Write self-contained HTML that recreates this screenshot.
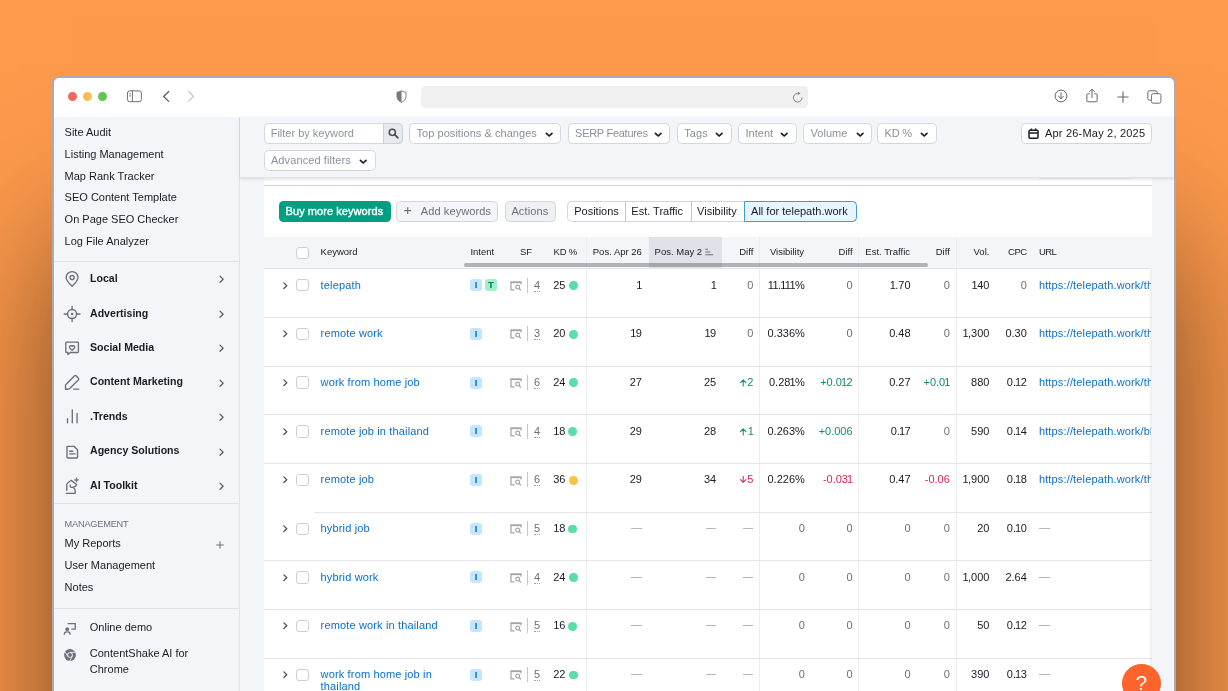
<!DOCTYPE html><html><head><meta charset='utf-8'><title>Position Tracking</title><style>
*{box-sizing:border-box;margin:0;padding:0}
html,body{width:1228px;height:691px;overflow:hidden}
body{position:relative;background:#FE9A4C;font-family:"Liberation Sans",sans-serif;color:#191B23;font-size:11px}
#root{position:absolute;left:0;top:0;width:1228px;height:691px;overflow:hidden;will-change:transform}
.a{position:absolute}
.t{position:absolute;white-space:nowrap;line-height:14px;height:14px}
.win{left:52px;top:76px;width:1124px;height:660px;border-radius:7px;background:#fff;border:2px solid #A9ACB1;box-shadow:0 150px 150px -20px rgba(0,0,0,.7);overflow:hidden}
.page{left:54px;top:117px;width:1120px;height:600px;background:#F4F5F9}
.b{font-weight:700;font-size:10.6px}
.g{color:#6C6E79}
.fg{color:#8C8F9B}
.btn{position:absolute;background:#fff;border:1px solid #D4D6DE;border-radius:4.5px;height:20.2px}
.hd{font-size:9.5px;color:#191B23}
.r{text-align:right}
.lnk{color:#0A6FCB;letter-spacing:.15px}
.mut{color:#8E92A0}
.n1{margin-left:-.95px;margin-right:-.55px}
.grn{color:#148A72}
.red{color:#D9284C}
.hl{position:absolute;height:1px;background:#E0E1E9}
.vl{position:absolute;width:1px;background:#ECEDF2}
.cb{position:absolute;width:12.4px;height:12.4px;border:1px solid #CBCED6;border-radius:3px;background:#fff}
svg{position:absolute;overflow:visible}
</style></head><body><div id='root'>
<div class='a win'></div>
<div class='a page'></div>
<div class='a' style='left:68.0px;top:91.80000000000001px;width:9.2px;height:9.2px;border-radius:50%;background:#EC6A5E'></div>
<div class='a' style='left:83.10000000000001px;top:91.80000000000001px;width:9.2px;height:9.2px;border-radius:50%;background:#F4BF4F'></div>
<div class='a' style='left:98.2px;top:91.80000000000001px;width:9.2px;height:9.2px;border-radius:50%;background:#61C554'></div>
<svg style='left:126px;top:89px' width='18' height='16' viewBox='0 0 18 16'><rect x='1.450' y='1.850' width='13.900' height='10.800' rx='2.200' fill='none' stroke='#6e6e6e' stroke-width='1'/><path d='M6.400 1.850V12.650' stroke='#6e6e6e' stroke-width='1'/><path d='M3.100 4.400h1.800M3.100 6.200h1.800M3.100 7.100h1.800' stroke='#808080' stroke-width='.7'/></svg>
<svg style='left:160px;top:89px' width='14' height='16' viewBox='0 0 14 16'><path d='M8.700 2.500L3.600 7.450l5.100 4.950' fill='none' stroke='#5a5a5a' stroke-width='1.200' stroke-linecap='round' stroke-linejoin='round'/></svg>
<svg style='left:184px;top:89px' width='14' height='16' viewBox='0 0 14 16'><path d='M4.600 2.500l4.900 4.950-4.900 4.950' fill='none' stroke='#c0c0c0' stroke-width='1.100' stroke-linecap='round' stroke-linejoin='round'/></svg>
<svg style='left:396px;top:90px' width='11' height='13' viewBox='0 0 11 13'><path d='M5.500.8C4 1.700 2.500 2.100 1 2.200V6.600c0 2.700 1.800 4.600 4.500 5.700 2.700-1.100 4.500-3 4.500-5.700V2.200C8.500 2.100 7 1.700 5.500.8z' fill='none' stroke='#787878' stroke-width='.95'/><path d='M5.500.8C4 1.700 2.500 2.100 1 2.200V6.600c0 2.700 1.800 4.600 4.500 5.700z' fill='#787878'/></svg>
<div class='a' style='left:420.500px;top:85.700px;width:387.200px;height:22.200px;border-radius:4.500px;background:#F0F0F0'></div>
<svg style='left:792px;top:91px' width='12' height='12' viewBox='0 0 12 12'><path d='M10 6.700A4.300 4.300 0 1 1 5.700 2.400' fill='none' stroke='#7d7d7d' stroke-width='.95'/><path d='M5.800.7L8.500 2.450 5.800 4.100z' fill='#7d7d7d'/></svg>
<svg style='left:1054px;top:89.300px' width='14' height='14' viewBox='0 0 14 14'><circle cx='7' cy='7' r='5.900' fill='none' stroke='#666' stroke-width='1'/><path d='M7 3.800v5.800M4.600 7.300L7 9.700l2.400-2.400' fill='none' stroke='#666' stroke-width='1' stroke-linecap='round' stroke-linejoin='round'/></svg>
<svg style='left:1085px;top:88px' width='14' height='16' viewBox='0 0 14 16'><path d='M4.700 5.800H2.800a0.900 0.900 0 0 0-.9.900v6.200a.9.900 0 0 0 .9.900h8.400a.9.900 0 0 0 .9-.9V6.700a.9.900 0 0 0-.9-.9H9.300' fill='none' stroke='#666' stroke-width='1'/><path d='M7 9.500V1.400M4.600 3.600L7 1.200l2.400 2.400' fill='none' stroke='#666' stroke-width='1' stroke-linecap='round' stroke-linejoin='round'/></svg>
<svg style='left:1117px;top:90.500px' width='12' height='12' viewBox='0 0 12 12'><path d='M6 .8v10.400M.8 6h10.400' stroke='#666' stroke-width='1.100' stroke-linecap='round'/></svg>
<svg style='left:1147px;top:89.500px' width='14' height='14' viewBox='0 0 14 14'><rect x='4.400' y='3.700' width='9.500' height='9.500' rx='1.800' fill='#fff' stroke='#707070' stroke-width='1'/><path d='M3.9 10.200H2.600a1.800 1.800 0 0 1-1.800-1.800V2.600A1.800 1.800 0 0 1 2.600.8h5.800a1.800 1.800 0 0 1 1.800 1.800v1.300' fill='none' stroke='#666' stroke-width='1'/></svg>
<div class='a' style='left:239px;top:117px;width:1px;height:600px;background:#E0E1E9'></div>
<div class='t ' style='left:64.60px;top:125px;'>Site Audit</div>
<div class='t ' style='left:64.60px;top:147px;'>Listing Management</div>
<div class='t ' style='left:64.60px;top:169px;'>Map Rank Tracker</div>
<div class='t ' style='left:64.60px;top:190px;'>SEO Content Template</div>
<div class='t ' style='left:64.60px;top:212px;'>On Page SEO Checker</div>
<div class='t ' style='left:64.60px;top:234px;'>Log File Analyzer</div>
<div class='hl' style='left:54px;top:261px;width:185px'></div>
<div class='t b' style='left:90.00px;top:271px;'>Local</div>
<svg style='left:64px;top:271.30px' width='16' height='16' viewBox='0 0 16 16'><path d='M8.100 15.200C5.200 12.500 2.200 9.900 2.200 6.500a5.900 5.900 0 0 1 11.800 0c0 3.400-3 6-5.900 8.700z' fill='none' stroke='#6C6E79' stroke-width='1.350' stroke-linecap='round' stroke-linejoin='round'/><circle cx='8.100' cy='6.600' r='2.100' fill='none' stroke='#6C6E79' stroke-width='1.350' stroke-linecap='round' stroke-linejoin='round'/></svg>
<svg style='left:219px;top:275.40px' width='6' height='9' viewBox='0 0 6 9'><path d='M1 1.100l3.100 3.100-3.100 3.100' fill='none' stroke='#5E606B' stroke-width='1.300' stroke-linecap='round' stroke-linejoin='round'/></svg>
<div class='t b' style='left:90.00px;top:306px;'>Advertising</div>
<svg style='left:64px;top:305.75px' width='16' height='16' viewBox='0 0 16 16'><circle cx='8.100' cy='8' r='4.500' fill='none' stroke='#6C6E79' stroke-width='1.350' stroke-linecap='round' stroke-linejoin='round'/><circle cx='8.100' cy='8' r='1.200' fill='#6C6E79'/><path d='M8.100 .4v3.100M8.100 12.500v3.100M.2 8h3.400M12.600 8h3.400' fill='none' stroke='#6C6E79' stroke-width='1.350' stroke-linecap='round' stroke-linejoin='round'/></svg>
<svg style='left:219px;top:309.85px' width='6' height='9' viewBox='0 0 6 9'><path d='M1 1.100l3.100 3.100-3.100 3.100' fill='none' stroke='#5E606B' stroke-width='1.300' stroke-linecap='round' stroke-linejoin='round'/></svg>
<div class='t b' style='left:90.00px;top:340px;'>Social Media</div>
<svg style='left:64px;top:340.20px' width='16' height='16' viewBox='0 0 16 16'><path d='M2.500 2.100h11.200a.7.700 0 0 1 .7.700v9a.7.700 0 0 1-.7.700H6.400L3.900 14.600v-2.100H2.500a.7.700 0 0 1-.7-.7v-9a.7.700 0 0 1 .7-.7z' fill='none' stroke='#6C6E79' stroke-width='1.350' stroke-linecap='round' stroke-linejoin='round'/><path d='M8.100 10.300c-1.400-1-2.700-2-2.700-3.300a1.400 1.400 0 0 1 2.700-.5 1.400 1.400 0 0 1 2.700.5c0 1.300-1.300 2.300-2.700 3.300z' fill='none' stroke='#6C6E79' stroke-width='1.350' stroke-linecap='round' stroke-linejoin='round'/></svg>
<svg style='left:219px;top:344.30px' width='6' height='9' viewBox='0 0 6 9'><path d='M1 1.100l3.100 3.100-3.100 3.100' fill='none' stroke='#5E606B' stroke-width='1.300' stroke-linecap='round' stroke-linejoin='round'/></svg>
<div class='t b' style='left:90.00px;top:374px;'>Content Marketing</div>
<svg style='left:64px;top:374.65px' width='16' height='16' viewBox='0 0 16 16'><path d='M1.500 14v-3l8.800-9a1.500 1.500 0 0 1 2.100 0l1.900 1.900a1.500 1.500 0 0 1 0 2.100L5.500 14.700 4 15.200H1.500z' fill='none' stroke='#6C6E79' stroke-width='1.350' stroke-linecap='round' stroke-linejoin='round' transform='translate(0,-1)'/><path d='M9.700 14.100h5.100' fill='none' stroke='#6C6E79' stroke-width='1.350' stroke-linecap='round' stroke-linejoin='round'/></svg>
<svg style='left:219px;top:378.75px' width='6' height='9' viewBox='0 0 6 9'><path d='M1 1.100l3.100 3.100-3.100 3.100' fill='none' stroke='#5E606B' stroke-width='1.300' stroke-linecap='round' stroke-linejoin='round'/></svg>
<div class='t b' style='left:90.00px;top:409px;'>.Trends</div>
<svg style='left:64px;top:409.10px' width='16' height='16' viewBox='0 0 16 16'><path d='M3.500 13.800v-4.200M8.300 13.800V.9M13.100 13.800V4.400' fill='none' stroke='#6C6E79' stroke-width='1.350' stroke-linecap='round' stroke-linejoin='round'/></svg>
<svg style='left:219px;top:413.20px' width='6' height='9' viewBox='0 0 6 9'><path d='M1 1.100l3.100 3.100-3.100 3.100' fill='none' stroke='#5E606B' stroke-width='1.300' stroke-linecap='round' stroke-linejoin='round'/></svg>
<div class='t b' style='left:90.00px;top:443px;'>Agency Solutions</div>
<svg style='left:64px;top:443.55px' width='16' height='16' viewBox='0 0 16 16'><path d='M3 3.100a.8.800 0 0 1 .8-.8h6.200l3.500 3.500v7.400a.8.800 0 0 1-.8.800H3.800a.8.800 0 0 1-.8-.8z' fill='none' stroke='#6C6E79' stroke-width='1.350' stroke-linecap='round' stroke-linejoin='round'/><path d='M5.600 7.200h3.200M5.600 9.800h5.400' fill='none' stroke='#6C6E79' stroke-width='1.350' stroke-linecap='round' stroke-linejoin='round'/></svg>
<svg style='left:219px;top:447.65px' width='6' height='9' viewBox='0 0 6 9'><path d='M1 1.100l3.100 3.100-3.100 3.100' fill='none' stroke='#5E606B' stroke-width='1.300' stroke-linecap='round' stroke-linejoin='round'/></svg>
<div class='t b' style='left:90.00px;top:478px;'>AI Toolkit</div>
<svg style='left:64px;top:478.00px' width='16' height='16' viewBox='0 0 16 16'><path d='M2.800 12.200V6.800C2.800 5 5.300 3.600 7.200 2.400l5.400 4.100c-.1 1-.6 1.500-1.500 1.800C9.800 8.800 8.300 9.500 6.900 9.400 6.300 8.800 6.200 8 6.300 7.100M9.100 9.200c1.500 1.100 2.200 2.500 2 3.800v2.400H2.300' fill='none' stroke='#6C6E79' stroke-width='1.350' stroke-linecap='round' stroke-linejoin='round'/><path d='M12.500-.5c.25 1.600.8 2.150 2.400 2.400-1.600.25-2.150.8-2.400 2.400-.25-1.600-.8-2.150-2.400-2.400 1.600-.25 2.150-.8 2.400-2.400z' fill='#6C6E79' stroke='#6C6E79' stroke-width='.5' stroke-linejoin='round'/></svg>
<svg style='left:219px;top:482.10px' width='6' height='9' viewBox='0 0 6 9'><path d='M1 1.100l3.100 3.100-3.100 3.100' fill='none' stroke='#5E606B' stroke-width='1.300' stroke-linecap='round' stroke-linejoin='round'/></svg>
<div class='hl' style='left:54px;top:503px;width:185px'></div>
<div class='t g' style='left:64.60px;top:517px;font-size:9.2px;letter-spacing:-.2px'>MANAGEMENT</div>
<div class='t ' style='left:64.60px;top:536px;'>My Reports</div>
<div class='t ' style='left:64.60px;top:558px;'>User Management</div>
<div class='t ' style='left:64.60px;top:580px;'>Notes</div>
<svg style='left:216.400px;top:540.800px' width='8' height='8' viewBox='0 0 8 8'><path d='M4 .3v7.400M.3 4h7.400' stroke='#6C6E79' stroke-width='1'/></svg>
<div class='hl' style='left:54px;top:608px;width:185px'></div>
<div class='t ' style='left:89.80px;top:620px;'>Online demo</div>
<div class='t ' style='left:89.80px;top:646px;'>ContentShake AI for</div>
<div class='t ' style='left:89.80px;top:662px;'>Chrome</div>
<svg style='left:63px;top:621.500px' width='14' height='14' viewBox='0 0 14 14'><path d='M4.600 1.700h7.600v5.500H8.300' fill='none' stroke='#6C6E79' stroke-width='1.300'/><circle cx='4.200' cy='7.200' r='1.900' fill='#6C6E79'/><path d='M1.300 12.700v-.4a2.400 2.400 0 0 1 2.400-2.400h1a2.400 2.400 0 0 1 2.400 2.400v.4' fill='none' stroke='#6C6E79' stroke-width='1.300'/></svg>
<svg style='left:63.800px;top:648.800px' width='12' height='12' viewBox='0 0 12 12'><circle cx='6' cy='6' r='5.900' fill='#6C6E79'/><circle cx='6' cy='6' r='2.800' fill='#F4F5F9'/><circle cx='6' cy='6' r='1.950' fill='#6C6E79'/><path d='M6 3.300h5.300M3.700 7.400L1.100 2.800M8.300 7.400L5.700 12' stroke='#F4F5F9' stroke-width='.85'/></svg>
<div class='a' style='left:240px;top:117px;width:934px;height:61px;background:#F4F5F9;border-bottom:1px solid #E2E3E9;box-shadow:0 1px 3px rgba(25,27,35,.12)'></div>
<div class='btn' style='left:263.700px;top:123.400px;width:139.200px'></div>
<div class='a' style='left:382.700px;top:123.400px;width:20.200px;height:20.200px;background:#E8E9EF;border:1px solid #CDD0D8;border-radius:0 4.500px 4.500px 0'></div>
<svg style='left:387.500px;top:128px' width='11' height='11' viewBox='0 0 11 11'><circle cx='4.300' cy='4.300' r='3.100' fill='none' stroke='#484A54' stroke-width='1.500'/><path d='M6.700 6.700l3.200 3.200' stroke='#484A54' stroke-width='1.700' stroke-linecap='round'/></svg>
<div class='t mut' style='left:270.70px;top:126px;'>Filter by keyword</div>
<div class='btn' style='left:409.3px;top:123.4px;width:152.0px'></div>
<div class='t fg' style='left:416.50px;top:126px;letter-spacing:0.05px'>Top positions &amp; changes</div>
<svg style='left:544.9px;top:131.6px' width='8.400' height='6' viewBox='0 0 8.400 6'><path d='M1.400 1.300l2.800 2.700 2.800-2.700' fill='none' stroke='#191B23' stroke-width='1.700' stroke-linecap='round' stroke-linejoin='round'/></svg>
<div class='btn' style='left:567.9px;top:123.4px;width:102.6px'></div>
<div class='t fg' style='left:575.10px;top:126px;letter-spacing:-0.28px'>SERP Features</div>
<svg style='left:654.1px;top:131.6px' width='8.400' height='6' viewBox='0 0 8.400 6'><path d='M1.400 1.300l2.800 2.700 2.800-2.700' fill='none' stroke='#191B23' stroke-width='1.700' stroke-linecap='round' stroke-linejoin='round'/></svg>
<div class='btn' style='left:677.1px;top:123.4px;width:54.5px'></div>
<div class='t fg' style='left:684.30px;top:126px;letter-spacing:0.05px'>Tags</div>
<svg style='left:715.2px;top:131.6px' width='8.400' height='6' viewBox='0 0 8.400 6'><path d='M1.400 1.300l2.800 2.700 2.800-2.700' fill='none' stroke='#191B23' stroke-width='1.700' stroke-linecap='round' stroke-linejoin='round'/></svg>
<div class='btn' style='left:738.2px;top:123.4px;width:58.5px'></div>
<div class='t fg' style='left:745.40px;top:126px;letter-spacing:0.05px'>Intent</div>
<svg style='left:780.3px;top:131.6px' width='8.400' height='6' viewBox='0 0 8.400 6'><path d='M1.400 1.300l2.800 2.700 2.800-2.700' fill='none' stroke='#191B23' stroke-width='1.700' stroke-linecap='round' stroke-linejoin='round'/></svg>
<div class='btn' style='left:803.3px;top:123.4px;width:68.6px'></div>
<div class='t fg' style='left:810.50px;top:126px;letter-spacing:0.05px'>Volume</div>
<svg style='left:855.5px;top:131.6px' width='8.400' height='6' viewBox='0 0 8.400 6'><path d='M1.400 1.300l2.800 2.700 2.800-2.700' fill='none' stroke='#191B23' stroke-width='1.700' stroke-linecap='round' stroke-linejoin='round'/></svg>
<div class='btn' style='left:877.4px;top:123.4px;width:59.3px'></div>
<div class='t fg' style='left:884.60px;top:126px;letter-spacing:-0.2px'>KD %</div>
<svg style='left:920.3px;top:131.6px' width='8.400' height='6' viewBox='0 0 8.400 6'><path d='M1.400 1.300l2.800 2.700 2.800-2.700' fill='none' stroke='#191B23' stroke-width='1.700' stroke-linecap='round' stroke-linejoin='round'/></svg>
<div class='btn' style='left:263.7px;top:150.4px;width:112.0px'></div>
<div class='t fg' style='left:270.90px;top:153px;letter-spacing:0.11px'>Advanced filters</div>
<svg style='left:359.3px;top:158.6px' width='8.400' height='6' viewBox='0 0 8.400 6'><path d='M1.400 1.300l2.800 2.700 2.800-2.700' fill='none' stroke='#191B23' stroke-width='1.700' stroke-linecap='round' stroke-linejoin='round'/></svg>
<div class='btn' style='left:1020.600px;top:123.400px;width:131.100px'></div>
<svg style='left:1027.500px;top:128px' width='11' height='11' viewBox='0 0 11 11'><rect x='1' y='2.200' width='9' height='8' rx='1' fill='none' stroke='#191B23' stroke-width='1.500'/><path d='M1 5h9' stroke='#191B23' stroke-width='1.500'/><path d='M3.400 .6v2.400M7.600 .6v2.400' stroke='#191B23' stroke-width='1.500'/></svg>
<div class='t ' style='left:1045.00px;top:126px;letter-spacing:.2px'>Apr 26-May 2, 2025</div>
<div class='a' style='left:264px;top:178px;width:888px;height:520px;background:#fff'></div>
<div class='a' style='left:263.700px;top:177.800px;width:888.300px;height:4px;background:linear-gradient(rgba(25,27,35,.10),rgba(25,27,35,0))'></div>
<div class='a' style='left:1036.600px;top:172px;width:99.400px;height:7.300px;border:1px solid #D1D4DB;border-top:none;border-radius:0 0 4px 4px;clip-path:inset(6.300px 0 0 0)'></div>
<div class='a' style='left:263.700px;top:185.200px;width:888.300px;height:1px;background:#D1D4DB'></div>
<div class='a' style='left:278.600px;top:201px;width:112px;height:20.800px;background:#009F81;border-radius:4.500px'></div>
<div class='t ' style='left:285.60px;top:204px;color:#fff;letter-spacing:.06px;-webkit-text-stroke:.4px #fff'>Buy more keywords</div>
<div class='btn' style='left:396.300px;top:201.200px;width:101.800px;height:20.600px;background:#F4F5F9'></div>
<svg style='left:404.300px;top:207.400px' width='7.400' height='7.400' viewBox='0 0 7.400 7.400'><path d='M3.700.3v6.800M.3 3.700h6.800' stroke='#6C6E79' stroke-width='1.150'/></svg>
<div class='t g' style='left:420.70px;top:204px;letter-spacing:.12px'>Add keywords</div>
<div class='btn' style='left:504.500px;top:201.200px;width:51.300px;height:20.600px;background:#EFF0F4'></div>
<div class='t g' style='left:511.40px;top:204px;letter-spacing:.12px'>Actions</div>
<div class='btn' style='left:567.300px;top:201.200px;width:289.500px;height:20.600px'></div>
<div class='a' style='left:624.700px;top:201.200px;width:1px;height:20.600px;background:#C4C7CF'></div>
<div class='a' style='left:690.500px;top:201.200px;width:1px;height:20.600px;background:#C4C7CF'></div>
<div class='a' style='left:744.200px;top:201.200px;width:112.600px;height:20.600px;background:#E8F4FF;border:1px solid #4296E2;border-radius:0 4.500px 4.500px 0'></div>
<div class='t ' style='left:574.20px;top:204px;'>Positions</div>
<div class='t ' style='left:631.30px;top:204px;'>Est. Traffic</div>
<div class='t ' style='left:697.10px;top:204px;'>Visibility</div>
<div class='t ' style='left:751.10px;top:204px;'>All for telepath.work</div>
<div class='a' style='left:264px;top:237px;width:888px;height:32px;background:#F4F5F9;border-bottom:1px solid #E3E4EA'></div>
<div class='a' style='left:648.500px;top:237px;width:73.500px;height:31px;background:#E0E1E9'></div>
<div class='t hd' style='left:320.60px;top:245px;'>Keyword</div>
<div class='t hd' style='left:470.40px;top:245px;'>Intent</div>
<div class='t hd' style='left:519.90px;top:245px;'>SF</div>
<div class='t hd' style='left:553.60px;top:245px;letter-spacing:-.2px'>KD %</div>
<div class='t hd' style='right:586.10px;top:245px;'>Pos. Apr 26</div>
<div class='t hd' style='left:654.60px;top:245px;'>Pos. May 2</div>
<svg style='left:705.300px;top:247.500px' width='9' height='8' viewBox='0 0 9 8'><path d='M.4 1.200h2.600M.4 4h4.800M.4 6.800h7.800' stroke='#6C6E79' stroke-width='1.100'/></svg>
<div class='t hd' style='right:474.70px;top:245px;'>Diff</div>
<div class='t hd' style='left:769.90px;top:245px;'>Visibility</div>
<div class='t hd' style='right:375.40px;top:245px;'>Diff</div>
<div class='t hd' style='left:865.30px;top:245px;'>Est. Traffic</div>
<div class='t hd' style='right:278.20px;top:245px;'>Diff</div>
<div class='t hd' style='right:238.60px;top:245px;'>Vol.</div>
<div class='t hd' style='right:201.20px;top:245px;letter-spacing:-.4px'>CPC</div>
<div class='t hd' style='left:1038.90px;top:245px;letter-spacing:-.6px'>URL</div>
<div class='cb' style='left:296.200px;top:246.900px'></div>
<div class='vl' style='left:586.2px;top:236.700px;height:460px'></div>
<div class='vl' style='left:758.7px;top:236.700px;height:460px'></div>
<div class='vl' style='left:858.0px;top:236.700px;height:460px'></div>
<div class='vl' style='left:956.1px;top:236.700px;height:460px'></div>
<svg style='left:282.600px;top:281.60px' width='5.200' height='7.400' viewBox='0 0 5.200 7.400'><path d='M.9.900l2.900 2.800-2.900 2.800' fill='none' stroke='#50525D' stroke-width='1.300' stroke-linecap='round' stroke-linejoin='round'/></svg>
<div class='cb' style='left:296.200px;top:279.10px'></div>
<div class='t lnk' style='left:320.60px;top:278px;'>telepath</div>
<div class='a' style='left:469.900px;top:279.30px;width:12.200px;height:12px;border-radius:3px;background:#C4E5FE;color:#006DCA;font-size:9.5px;font-weight:700;text-align:center;line-height:12px'>I</div>
<div class='a' style='left:484.800px;top:279.30px;width:12.200px;height:12px;border-radius:3px;background:#9EF2C9;color:#007C65;font-size:9.5px;font-weight:700;text-align:center;line-height:12px'>T</div>
<svg style='left:509.500px;top:280.80px' width='12' height='10' viewBox='0 0 12 10'><path d='M.5 1.200h11' stroke='#A3A5B0' stroke-width='1.900'/><path d='M11 3.400V1M1 1v7.900h3.500' fill='none' stroke='#A3A5B0' stroke-width='1.250'/><circle cx='7.700' cy='6.100' r='1.900' fill='none' stroke='#A3A5B0' stroke-width='1.200'/><path d='M9.100 7.500l1.900 1.900' stroke='#A3A5B0' stroke-width='1.300'/></svg>
<div class='a' style='left:527.200px;top:277.50px;width:1px;height:15.200px;background:#C4C7CF'></div>
<div class='t g' style='left:534.10px;top:278px;border-bottom:1px dotted #9EA1AC;height:14px'>4</div>
<div class='t ' style='left:553.20px;top:278px;'>25</div>
<div class='a' style='left:568.8px;top:281.10px;width:8.800px;height:8.800px;border-radius:50%;background:#59DDAA'></div>
<div class='t ' style='right:586.10px;top:278px;'><span class='n1'>1</span></div>
<div class='t ' style='right:511.80px;top:278px;'><span class='n1'>1</span></div>
<div class='t g' style='right:474.70px;top:278px;'>0</div>
<div class='t ' style='right:423.20px;top:278px;'><span class='n1'>1</span><span class='n1'>1</span>.<span class='n1'>1</span><span class='n1'>1</span><span class='n1'>1</span>%</div>
<div class='t g' style='right:375.40px;top:278px;'>0</div>
<div class='t ' style='right:317.40px;top:278px;'><span class='n1'>1</span>.70</div>
<div class='t g' style='right:278.20px;top:278px;'>0</div>
<div class='t ' style='right:238.60px;top:278px;'><span class='n1'>1</span>40</div>
<div class='t g' style='right:201.20px;top:278px;'>0</div>
<div class='t lnk' style='left:1038.900px;top:278px;width:112.600px;overflow:hidden'>https://telepath.work/th</div>
<div class='hl' style='left:264px;top:316.88px;width:888px;background:#E3E4EA'></div>
<svg style='left:282.600px;top:330.28px' width='5.200' height='7.400' viewBox='0 0 5.200 7.400'><path d='M.9.900l2.900 2.800-2.900 2.800' fill='none' stroke='#50525D' stroke-width='1.300' stroke-linecap='round' stroke-linejoin='round'/></svg>
<div class='cb' style='left:296.200px;top:327.78px'></div>
<div class='t lnk' style='left:320.60px;top:326px;'>remote work</div>
<div class='a' style='left:469.900px;top:327.98px;width:12.200px;height:12px;border-radius:3px;background:#C4E5FE;color:#006DCA;font-size:9.5px;font-weight:700;text-align:center;line-height:12px'>I</div>
<svg style='left:509.500px;top:329.48px' width='12' height='10' viewBox='0 0 12 10'><path d='M.5 1.200h11' stroke='#A3A5B0' stroke-width='1.900'/><path d='M11 3.400V1M1 1v7.900h3.500' fill='none' stroke='#A3A5B0' stroke-width='1.250'/><circle cx='7.700' cy='6.100' r='1.900' fill='none' stroke='#A3A5B0' stroke-width='1.200'/><path d='M9.100 7.500l1.900 1.900' stroke='#A3A5B0' stroke-width='1.300'/></svg>
<div class='a' style='left:527.200px;top:326.18px;width:1px;height:15.200px;background:#C4C7CF'></div>
<div class='t g' style='left:534.10px;top:326px;border-bottom:1px dotted #9EA1AC;height:14px'>3</div>
<div class='t ' style='left:553.20px;top:326px;'>20</div>
<div class='a' style='left:568.8px;top:329.78px;width:8.800px;height:8.800px;border-radius:50%;background:#59DDAA'></div>
<div class='t ' style='right:586.10px;top:326px;'><span class='n1'>1</span>9</div>
<div class='t ' style='right:511.80px;top:326px;'><span class='n1'>1</span>9</div>
<div class='t g' style='right:474.70px;top:326px;'>0</div>
<div class='t ' style='right:423.20px;top:326px;'>0.336%</div>
<div class='t g' style='right:375.40px;top:326px;'>0</div>
<div class='t ' style='right:317.40px;top:326px;'>0.48</div>
<div class='t g' style='right:278.20px;top:326px;'>0</div>
<div class='t ' style='right:238.60px;top:326px;'><span class='n1'>1</span>,300</div>
<div class='t ' style='right:201.20px;top:326px;'>0.30</div>
<div class='t lnk' style='left:1038.900px;top:326px;width:112.600px;overflow:hidden'>https://telepath.work/th</div>
<div class='hl' style='left:264px;top:365.56px;width:888px;background:#E3E4EA'></div>
<svg style='left:282.600px;top:378.96px' width='5.200' height='7.400' viewBox='0 0 5.200 7.400'><path d='M.9.900l2.900 2.800-2.900 2.800' fill='none' stroke='#50525D' stroke-width='1.300' stroke-linecap='round' stroke-linejoin='round'/></svg>
<div class='cb' style='left:296.200px;top:376.46px'></div>
<div class='t lnk' style='left:320.60px;top:375px;'>work from home job</div>
<div class='a' style='left:469.900px;top:376.66px;width:12.200px;height:12px;border-radius:3px;background:#C4E5FE;color:#006DCA;font-size:9.5px;font-weight:700;text-align:center;line-height:12px'>I</div>
<svg style='left:509.500px;top:378.16px' width='12' height='10' viewBox='0 0 12 10'><path d='M.5 1.200h11' stroke='#A3A5B0' stroke-width='1.900'/><path d='M11 3.400V1M1 1v7.900h3.500' fill='none' stroke='#A3A5B0' stroke-width='1.250'/><circle cx='7.700' cy='6.100' r='1.900' fill='none' stroke='#A3A5B0' stroke-width='1.200'/><path d='M9.100 7.500l1.900 1.900' stroke='#A3A5B0' stroke-width='1.300'/></svg>
<div class='a' style='left:527.200px;top:374.86px;width:1px;height:15.200px;background:#C4C7CF'></div>
<div class='t g' style='left:534.10px;top:375px;border-bottom:1px dotted #9EA1AC;height:14px'>6</div>
<div class='t ' style='left:553.20px;top:375px;'>24</div>
<div class='a' style='left:568.8px;top:378.46px;width:8.800px;height:8.800px;border-radius:50%;background:#59DDAA'></div>
<div class='t ' style='right:586.10px;top:375px;'>27</div>
<div class='t ' style='right:511.80px;top:375px;'>25</div>
<svg style='left:739.50px;top:379.00px' width='6.400' height='7' viewBox='0 0 6.400 7'><path d='M3.200 6.900V.9M.5 3.600L3.200.9l2.700 2.700' fill='none' stroke='#148A72' stroke-width='1.050' stroke-linecap='round' stroke-linejoin='round'/></svg>
<div class='t grn' style='right:474.70px;top:375px;'>2</div>
<div class='t ' style='right:423.20px;top:375px;'>0.28<span class='n1'>1</span>%</div>
<div class='t grn' style='right:375.40px;top:375px;'>+0.0<span class='n1'>1</span>2</div>
<div class='t ' style='right:317.40px;top:375px;'>0.27</div>
<div class='t grn' style='right:278.20px;top:375px;'>+0.0<span class='n1'>1</span></div>
<div class='t ' style='right:238.60px;top:375px;'>880</div>
<div class='t ' style='right:201.20px;top:375px;'>0.<span class='n1'>1</span>2</div>
<div class='t lnk' style='left:1038.900px;top:375px;width:112.600px;overflow:hidden'>https://telepath.work/th</div>
<div class='hl' style='left:264px;top:414.24px;width:888px;background:#E3E4EA'></div>
<svg style='left:282.600px;top:427.64px' width='5.200' height='7.400' viewBox='0 0 5.200 7.400'><path d='M.9.900l2.900 2.800-2.900 2.800' fill='none' stroke='#50525D' stroke-width='1.300' stroke-linecap='round' stroke-linejoin='round'/></svg>
<div class='cb' style='left:296.200px;top:425.14px'></div>
<div class='t lnk' style='left:320.60px;top:424px;'>remote job in thailand</div>
<div class='a' style='left:469.900px;top:425.34px;width:12.200px;height:12px;border-radius:3px;background:#C4E5FE;color:#006DCA;font-size:9.5px;font-weight:700;text-align:center;line-height:12px'>I</div>
<svg style='left:509.500px;top:426.84px' width='12' height='10' viewBox='0 0 12 10'><path d='M.5 1.200h11' stroke='#A3A5B0' stroke-width='1.900'/><path d='M11 3.400V1M1 1v7.900h3.500' fill='none' stroke='#A3A5B0' stroke-width='1.250'/><circle cx='7.700' cy='6.100' r='1.900' fill='none' stroke='#A3A5B0' stroke-width='1.200'/><path d='M9.100 7.500l1.900 1.900' stroke='#A3A5B0' stroke-width='1.300'/></svg>
<div class='a' style='left:527.200px;top:423.54px;width:1px;height:15.200px;background:#C4C7CF'></div>
<div class='t g' style='left:534.10px;top:424px;border-bottom:1px dotted #9EA1AC;height:14px'>4</div>
<div class='t ' style='left:553.20px;top:424px;'>18</div>
<div class='a' style='left:567.8px;top:427.14px;width:8.800px;height:8.800px;border-radius:50%;background:#59DDAA'></div>
<div class='t ' style='right:586.10px;top:424px;'>29</div>
<div class='t ' style='right:511.80px;top:424px;'>28</div>
<svg style='left:739.50px;top:428.00px' width='6.400' height='7' viewBox='0 0 6.400 7'><path d='M3.200 6.900V.9M.5 3.600L3.200.9l2.700 2.700' fill='none' stroke='#148A72' stroke-width='1.050' stroke-linecap='round' stroke-linejoin='round'/></svg>
<div class='t grn' style='right:474.70px;top:424px;'><span class='n1'>1</span></div>
<div class='t ' style='right:423.20px;top:424px;'>0.263%</div>
<div class='t grn' style='right:375.40px;top:424px;'>+0.006</div>
<div class='t ' style='right:317.40px;top:424px;'>0.<span class='n1'>1</span>7</div>
<div class='t g' style='right:278.20px;top:424px;'>0</div>
<div class='t ' style='right:238.60px;top:424px;'>590</div>
<div class='t ' style='right:201.20px;top:424px;'>0.<span class='n1'>1</span>4</div>
<div class='t lnk' style='left:1038.900px;top:424px;width:112.600px;overflow:hidden'>https://telepath.work/bl</div>
<div class='hl' style='left:264px;top:462.92px;width:888px;background:#E3E4EA'></div>
<svg style='left:282.600px;top:476.32px' width='5.200' height='7.400' viewBox='0 0 5.200 7.400'><path d='M.9.900l2.900 2.800-2.900 2.800' fill='none' stroke='#50525D' stroke-width='1.300' stroke-linecap='round' stroke-linejoin='round'/></svg>
<div class='cb' style='left:296.200px;top:473.82px'></div>
<div class='t lnk' style='left:320.60px;top:472px;'>remote job</div>
<div class='a' style='left:469.900px;top:474.02px;width:12.200px;height:12px;border-radius:3px;background:#C4E5FE;color:#006DCA;font-size:9.5px;font-weight:700;text-align:center;line-height:12px'>I</div>
<svg style='left:509.500px;top:475.52px' width='12' height='10' viewBox='0 0 12 10'><path d='M.5 1.200h11' stroke='#A3A5B0' stroke-width='1.900'/><path d='M11 3.400V1M1 1v7.900h3.500' fill='none' stroke='#A3A5B0' stroke-width='1.250'/><circle cx='7.700' cy='6.100' r='1.900' fill='none' stroke='#A3A5B0' stroke-width='1.200'/><path d='M9.100 7.500l1.900 1.900' stroke='#A3A5B0' stroke-width='1.300'/></svg>
<div class='a' style='left:527.200px;top:472.22px;width:1px;height:15.200px;background:#C4C7CF'></div>
<div class='t g' style='left:534.10px;top:472px;border-bottom:1px dotted #9EA1AC;height:14px'>6</div>
<div class='t ' style='left:553.20px;top:472px;'>36</div>
<div class='a' style='left:568.8px;top:475.82px;width:8.800px;height:8.800px;border-radius:50%;background:#FDC23C'></div>
<div class='t ' style='right:586.10px;top:472px;'>29</div>
<div class='t ' style='right:511.80px;top:472px;'>34</div>
<svg style='left:739.50px;top:476.00px' width='6.400' height='7' viewBox='0 0 6.400 7'><path d='M3.200.3V6.300M.5 3.600L3.200 6.300l2.700-2.700' fill='none' stroke='#D9284C' stroke-width='1.050' stroke-linecap='round' stroke-linejoin='round'/></svg>
<div class='t red' style='right:474.70px;top:472px;'>5</div>
<div class='t ' style='right:423.20px;top:472px;'>0.226%</div>
<div class='t red' style='right:375.40px;top:472px;'>-0.03<span class='n1'>1</span></div>
<div class='t ' style='right:317.40px;top:472px;'>0.47</div>
<div class='t red' style='right:278.20px;top:472px;'>-0.06</div>
<div class='t ' style='right:238.60px;top:472px;'><span class='n1'>1</span>,900</div>
<div class='t ' style='right:201.20px;top:472px;'>0.<span class='n1'>1</span>8</div>
<div class='t lnk' style='left:1038.900px;top:472px;width:112.600px;overflow:hidden'>https://telepath.work/th</div>
<div class='hl' style='left:314.2px;top:511.60px;width:837.8px;background:#E3E4EA'></div>
<svg style='left:282.600px;top:525.00px' width='5.200' height='7.400' viewBox='0 0 5.200 7.400'><path d='M.9.900l2.900 2.800-2.900 2.800' fill='none' stroke='#50525D' stroke-width='1.300' stroke-linecap='round' stroke-linejoin='round'/></svg>
<div class='cb' style='left:296.200px;top:522.50px'></div>
<div class='t lnk' style='left:320.60px;top:521px;'>hybrid job</div>
<div class='a' style='left:469.900px;top:522.70px;width:12.200px;height:12px;border-radius:3px;background:#C4E5FE;color:#006DCA;font-size:9.5px;font-weight:700;text-align:center;line-height:12px'>I</div>
<svg style='left:509.500px;top:524.20px' width='12' height='10' viewBox='0 0 12 10'><path d='M.5 1.200h11' stroke='#A3A5B0' stroke-width='1.900'/><path d='M11 3.400V1M1 1v7.900h3.500' fill='none' stroke='#A3A5B0' stroke-width='1.250'/><circle cx='7.700' cy='6.100' r='1.900' fill='none' stroke='#A3A5B0' stroke-width='1.200'/><path d='M9.100 7.500l1.900 1.900' stroke='#A3A5B0' stroke-width='1.300'/></svg>
<div class='a' style='left:527.200px;top:520.90px;width:1px;height:15.200px;background:#C4C7CF'></div>
<div class='t g' style='left:534.10px;top:521px;border-bottom:1px dotted #9EA1AC;height:14px'>5</div>
<div class='t ' style='left:553.20px;top:521px;'>18</div>
<div class='a' style='left:567.8px;top:524.50px;width:8.800px;height:8.800px;border-radius:50%;background:#59DDAA'></div>
<div class='a' style='left:631.4px;top:528px;width:10.500px;height:1px;background:#B4B7C0'></div>
<div class='a' style='left:705.7px;top:528px;width:10.500px;height:1px;background:#B4B7C0'></div>
<div class='a' style='left:742.8px;top:528px;width:10.500px;height:1px;background:#B4B7C0'></div>
<div class='t g' style='right:423.20px;top:521px;'>0</div>
<div class='t g' style='right:375.40px;top:521px;'>0</div>
<div class='t g' style='right:317.40px;top:521px;'>0</div>
<div class='t g' style='right:278.20px;top:521px;'>0</div>
<div class='t ' style='right:238.60px;top:521px;'>20</div>
<div class='t ' style='right:201.20px;top:521px;'>0.<span class='n1'>1</span>0</div>
<div class='a' style='left:1039px;top:528px;width:10.500px;height:1px;background:#B4B7C0'></div>
<div class='hl' style='left:264px;top:560.28px;width:888px;background:#E3E4EA'></div>
<svg style='left:282.600px;top:573.68px' width='5.200' height='7.400' viewBox='0 0 5.200 7.400'><path d='M.9.900l2.900 2.800-2.900 2.800' fill='none' stroke='#50525D' stroke-width='1.300' stroke-linecap='round' stroke-linejoin='round'/></svg>
<div class='cb' style='left:296.200px;top:571.18px'></div>
<div class='t lnk' style='left:320.60px;top:570px;'>hybrid work</div>
<div class='a' style='left:469.900px;top:571.38px;width:12.200px;height:12px;border-radius:3px;background:#C4E5FE;color:#006DCA;font-size:9.5px;font-weight:700;text-align:center;line-height:12px'>I</div>
<svg style='left:509.500px;top:572.88px' width='12' height='10' viewBox='0 0 12 10'><path d='M.5 1.200h11' stroke='#A3A5B0' stroke-width='1.900'/><path d='M11 3.400V1M1 1v7.900h3.500' fill='none' stroke='#A3A5B0' stroke-width='1.250'/><circle cx='7.700' cy='6.100' r='1.900' fill='none' stroke='#A3A5B0' stroke-width='1.200'/><path d='M9.100 7.500l1.900 1.900' stroke='#A3A5B0' stroke-width='1.300'/></svg>
<div class='a' style='left:527.200px;top:569.58px;width:1px;height:15.200px;background:#C4C7CF'></div>
<div class='t g' style='left:534.10px;top:570px;border-bottom:1px dotted #9EA1AC;height:14px'>4</div>
<div class='t ' style='left:553.20px;top:570px;'>24</div>
<div class='a' style='left:568.8px;top:573.18px;width:8.800px;height:8.800px;border-radius:50%;background:#59DDAA'></div>
<div class='a' style='left:631.4px;top:577px;width:10.500px;height:1px;background:#B4B7C0'></div>
<div class='a' style='left:705.7px;top:577px;width:10.500px;height:1px;background:#B4B7C0'></div>
<div class='a' style='left:742.8px;top:577px;width:10.500px;height:1px;background:#B4B7C0'></div>
<div class='t g' style='right:423.20px;top:570px;'>0</div>
<div class='t g' style='right:375.40px;top:570px;'>0</div>
<div class='t g' style='right:317.40px;top:570px;'>0</div>
<div class='t g' style='right:278.20px;top:570px;'>0</div>
<div class='t ' style='right:238.60px;top:570px;'><span class='n1'>1</span>,000</div>
<div class='t ' style='right:201.20px;top:570px;'>2.64</div>
<div class='a' style='left:1039px;top:577px;width:10.500px;height:1px;background:#B4B7C0'></div>
<div class='hl' style='left:264px;top:608.96px;width:888px;background:#E3E4EA'></div>
<svg style='left:282.600px;top:622.36px' width='5.200' height='7.400' viewBox='0 0 5.200 7.400'><path d='M.9.900l2.900 2.800-2.900 2.800' fill='none' stroke='#50525D' stroke-width='1.300' stroke-linecap='round' stroke-linejoin='round'/></svg>
<div class='cb' style='left:296.200px;top:619.86px'></div>
<div class='t lnk' style='left:320.60px;top:618px;'>remote work in thailand</div>
<div class='a' style='left:469.900px;top:620.06px;width:12.200px;height:12px;border-radius:3px;background:#C4E5FE;color:#006DCA;font-size:9.5px;font-weight:700;text-align:center;line-height:12px'>I</div>
<svg style='left:509.500px;top:621.56px' width='12' height='10' viewBox='0 0 12 10'><path d='M.5 1.200h11' stroke='#A3A5B0' stroke-width='1.900'/><path d='M11 3.400V1M1 1v7.900h3.500' fill='none' stroke='#A3A5B0' stroke-width='1.250'/><circle cx='7.700' cy='6.100' r='1.900' fill='none' stroke='#A3A5B0' stroke-width='1.200'/><path d='M9.100 7.500l1.900 1.900' stroke='#A3A5B0' stroke-width='1.300'/></svg>
<div class='a' style='left:527.200px;top:618.26px;width:1px;height:15.200px;background:#C4C7CF'></div>
<div class='t g' style='left:534.10px;top:618px;border-bottom:1px dotted #9EA1AC;height:14px'>5</div>
<div class='t ' style='left:553.20px;top:618px;'>16</div>
<div class='a' style='left:567.8px;top:621.86px;width:8.800px;height:8.800px;border-radius:50%;background:#59DDAA'></div>
<div class='a' style='left:631.4px;top:625px;width:10.500px;height:1px;background:#B4B7C0'></div>
<div class='a' style='left:705.7px;top:625px;width:10.500px;height:1px;background:#B4B7C0'></div>
<div class='a' style='left:742.8px;top:625px;width:10.500px;height:1px;background:#B4B7C0'></div>
<div class='t g' style='right:423.20px;top:618px;'>0</div>
<div class='t g' style='right:375.40px;top:618px;'>0</div>
<div class='t g' style='right:317.40px;top:618px;'>0</div>
<div class='t g' style='right:278.20px;top:618px;'>0</div>
<div class='t ' style='right:238.60px;top:618px;'>50</div>
<div class='t ' style='right:201.20px;top:618px;'>0.<span class='n1'>1</span>2</div>
<div class='a' style='left:1039px;top:625px;width:10.500px;height:1px;background:#B4B7C0'></div>
<div class='hl' style='left:264px;top:657.64px;width:888px;background:#E3E4EA'></div>
<svg style='left:282.600px;top:671.04px' width='5.200' height='7.400' viewBox='0 0 5.200 7.400'><path d='M.9.900l2.900 2.800-2.900 2.800' fill='none' stroke='#50525D' stroke-width='1.300' stroke-linecap='round' stroke-linejoin='round'/></svg>
<div class='cb' style='left:296.200px;top:668.54px'></div>
<div class='t lnk' style='left:320.60px;top:667px;'>work from home job in</div>
<div class='t lnk' style='left:320.60px;top:679px;'>thailand</div>
<div class='a' style='left:469.900px;top:668.74px;width:12.200px;height:12px;border-radius:3px;background:#C4E5FE;color:#006DCA;font-size:9.5px;font-weight:700;text-align:center;line-height:12px'>I</div>
<svg style='left:509.500px;top:670.24px' width='12' height='10' viewBox='0 0 12 10'><path d='M.5 1.200h11' stroke='#A3A5B0' stroke-width='1.900'/><path d='M11 3.400V1M1 1v7.900h3.500' fill='none' stroke='#A3A5B0' stroke-width='1.250'/><circle cx='7.700' cy='6.100' r='1.900' fill='none' stroke='#A3A5B0' stroke-width='1.200'/><path d='M9.100 7.500l1.900 1.900' stroke='#A3A5B0' stroke-width='1.300'/></svg>
<div class='a' style='left:527.200px;top:666.94px;width:1px;height:15.200px;background:#C4C7CF'></div>
<div class='t g' style='left:534.10px;top:667px;border-bottom:1px dotted #9EA1AC;height:14px'>5</div>
<div class='t ' style='left:553.20px;top:667px;'>22</div>
<div class='a' style='left:568.8px;top:670.54px;width:8.800px;height:8.800px;border-radius:50%;background:#59DDAA'></div>
<div class='a' style='left:631.4px;top:674px;width:10.500px;height:1px;background:#B4B7C0'></div>
<div class='a' style='left:705.7px;top:674px;width:10.500px;height:1px;background:#B4B7C0'></div>
<div class='a' style='left:742.8px;top:674px;width:10.500px;height:1px;background:#B4B7C0'></div>
<div class='t g' style='right:423.20px;top:667px;'>0</div>
<div class='t g' style='right:375.40px;top:667px;'>0</div>
<div class='t g' style='right:317.40px;top:667px;'>0</div>
<div class='t g' style='right:278.20px;top:667px;'>0</div>
<div class='t ' style='right:238.60px;top:667px;'>390</div>
<div class='t ' style='right:201.20px;top:667px;'>0.<span class='n1'>1</span>3</div>
<div class='a' style='left:1039px;top:674px;width:10.500px;height:1px;background:#B4B7C0'></div>
<div class='a' style='left:1148.500px;top:269px;width:3.500px;height:430px;background:linear-gradient(to right,rgba(25,27,35,0),rgba(25,27,35,.09))'></div>
<div class='a' style='left:464.300px;top:262.900px;width:464.200px;height:4.200px;border-radius:2.100px;background:rgba(25,27,35,.3)'></div>
<div class='a' style='left:1122px;top:664px;width:38.700px;height:38.700px;border-radius:50%;background:#FF642D;color:#fff;font-size:21px;text-align:center;line-height:38px'>?</div>
</div></body></html>
